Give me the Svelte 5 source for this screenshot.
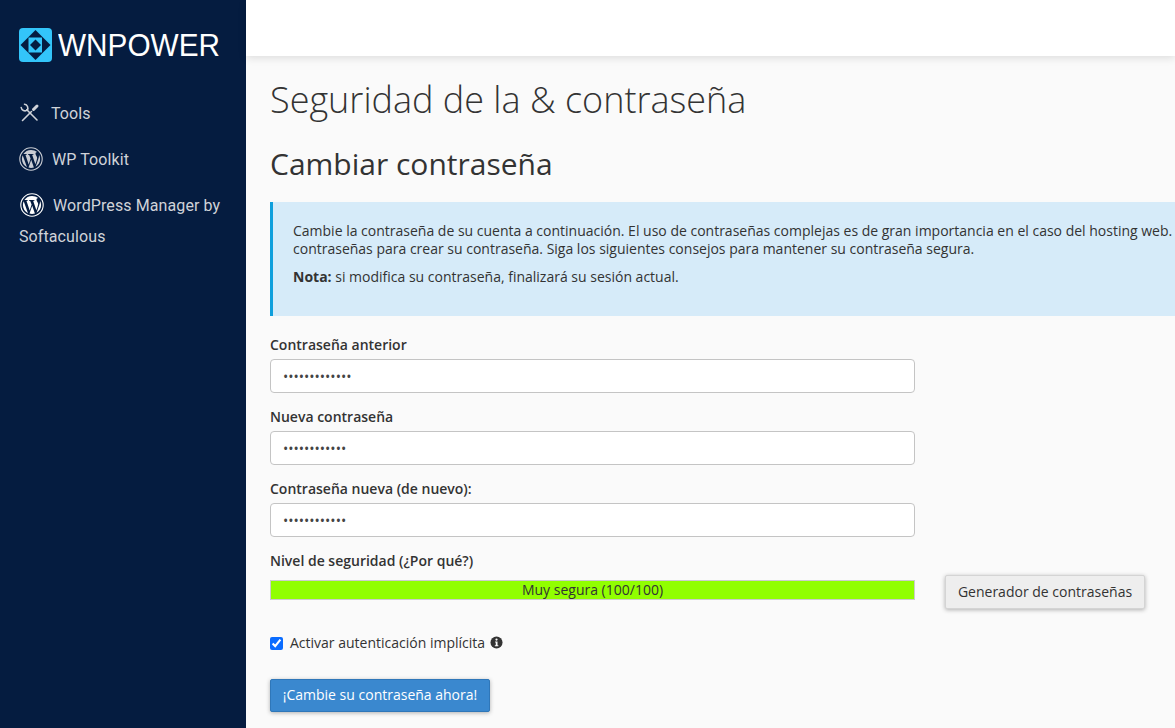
<script lang="ts">
  const fields = [
    { label: 'Contraseña anterior', value: '•••••••••••••' },
    { label: 'Nueva contraseña', value: '••••••••••••' },
    { label: 'Contraseña nueva (de nuevo):', value: '••••••••••••' }
  ];
</script>

{#snippet wpIcon()}
  <svg class="wp" viewBox="0 0 24 24" aria-hidden="true">
    <circle cx="12" cy="12" r="11.2" fill="none" stroke="currentColor" stroke-width="1.1" />
    <path fill="currentColor" d="M2.9 12c0 3.6 2.1 6.7 5.1 8.2L3.7 8.3C3.2 9.5 2.9 10.7 2.9 12zM18.2 11.5c0-1.1-.4-1.9-.8-2.5-.5-.8-.9-1.4-.9-2.2 0-.9.6-1.700 1.600-1.700h.1C16.500 3.900 14.400 3 12 3 8.800 3 6 4.600 4.400 7.100h.6c.9 0 2.400-.1 2.400-.1.5 0 .5.7.1.8 0 0-.5.1-1 .1l3.200 9.500 1.900-5.800-1.400-3.700c-.5 0-.9-.1-.9-.1-.5 0-.4-.8.1-.8 0 0 1.500.1 2.300.1.9 0 2.400-.1 2.400-.1.5 0 .5.7.1.8 0 0-.5.1-1 .1l3.200 9.400.9-2.900c.4-1.200.7-2.100.7-2.900zM12.200 12.800l-2.700 7.800c.8.2 1.600.4 2.500.4 1 0 2-.2 3-.5l-.1-.1-2.700-7.600zM19.900 7.700c0 .3.1.6.1 1 0 .9-.2 1.900-.7 3.200l-2.700 7.900c2.700-1.600 4.500-4.500 4.500-7.800 0-1.600-.4-3-1.200-4.300z" />
  </svg>
{/snippet}

<div class="layout">
  <aside class="sidebar">
    <div class="brand">
      <svg class="logo" viewBox="0 0 33 34" aria-hidden="true">
        <rect width="33" height="34" rx="4" fill="#33c5fa" />
        <path fill="#051c40" d="M16.500 2 31.500 17 16.500 32 1.500 17z" />
        <rect x="9.500" y="9.500" width="13.500" height="15" fill="#33c5fa" />
        <path fill="#051c40" d="M16.500 11.500 22 17l-5.500 5.500L11 17z" />
      </svg>
      <span class="wordmark">WNPOWER</span>
    </div>
    <nav class="menu">
      <a class="item">
        <svg class="tools" viewBox="0 0 20 20" aria-hidden="true">
          <g fill="none" stroke="currentColor" stroke-linecap="round">
            <path stroke-width="1.600" d="M2.500 17.500 11.500 8.500M6.800 6.800 17 17" />
            <path stroke-width="3" d="M13.500 6.500 17 3" />
            <path stroke-width="1.600" d="M1.200 4.500A3.900 3.900 0 0 0 7.200 7.200 3.900 3.900 0 0 0 4.500 1.200" />
          </g>
        </svg>
        <span>Tools</span>
      </a>
      <a class="item">{@render wpIcon()}<span>WP Toolkit</span></a>
      <a class="item wrap"><span class="bright">{@render wpIcon()}</span>WordPress Manager by Softaculous</a>
    </nav>
  </aside>

  <div class="main">
    <header class="topbar"></header>
    <main class="content">
      <h1>Seguridad de la &amp; contraseña</h1>
      <h2>Cambiar contraseña</h2>

      <div class="notice">
        <p>Cambie la contraseña de su cuenta a continuación. El uso de contraseñas complejas es de gran importancia en el caso del hosting web.<br />contraseñas para crear su contraseña. Siga los siguientes consejos para mantener su contraseña segura.</p>
        <p><strong>Nota:</strong> si modifica su contraseña, finalizará su sesión actual.</p>
      </div>

      <form class="form" onsubmit={(e) => e.preventDefault()}>
        {#each fields as f}
          <div class="field">
            <label>{f.label}</label>
            <div class="input">{f.value}</div>
          </div>
        {/each}

        <div class="strength">
          <label>Nivel de seguridad (¿Por qué?)</label>
          <div class="row">
            <div class="meter">Muy segura (100/100)</div>
            <button type="button" class="btn-gen">Generador de contraseñas</button>
          </div>
        </div>

        <div class="check">
          <input type="checkbox" checked />
          <span>Activar autenticación implícita</span>
          <svg class="info" viewBox="0 0 14 14" aria-hidden="true">
            <circle cx="7" cy="7" r="6.500" fill="#333" />
            <circle cx="7" cy="3.800" r="1.200" fill="#fafafa" />
            <path fill="#fafafa" d="M5.500 6h2.600v4h.9v1.100H5.200V10h1V7.100h-.7z" />
          </svg>
        </div>

        <button type="submit" class="btn-primary">¡Cambie su contraseña ahora!</button>
      </form>
    </main>
  </div>
</div>

<style>
  :global(body) {
    overflow: hidden;
    background: #fafafa;
  }

  .layout {
    display: flex;
    height: 728px;
    overflow: hidden;
    font-family: "Open Sans", sans-serif;
    color: #333;
  }

  .sidebar {
    width: 246px;
    flex: none;
    background: #051c40;
    box-sizing: border-box;
    padding: 28px 19px 0;
    font-family: Roboto, sans-serif;
  }

  .brand {
    display: flex;
    align-items: center;
    gap: 6px;
    height: 34px;
  }

  .logo {
    width: 33px;
    height: 34px;
    flex: none;
  }

  .wordmark {
    font-family: "Liberation Sans", sans-serif;
    font-size: 32px;
    line-height: 34px;
    color: #fff;
    white-space: nowrap;
    transform: scaleX(0.93);
    transform-origin: left;
  }

  .menu {
    margin-top: 28px;
    display: flex;
    flex-direction: column;
  }

  .item {
    display: flex;
    align-items: center;
    gap: 9px;
    height: 46px;
    font-size: 16px;
    letter-spacing: 0.1px;
    color: #d0d3d9;
  }

  .item .wp {
    color: #c9ccd3;
  }

  .item.wrap {
    display: block;
    height: auto;
    line-height: 31px;
    margin-top: 8px;
  }

  .bright {
    display: inline-block;
    vertical-align: -6px;
    margin: 0 9px 0 1px;
    color: #fff;
  }

  .bright .wp {
    color: #fff;
    display: block;
  }

  .wp {
    width: 24px;
    height: 24px;
    flex: none;
  }

  .tools {
    width: 20px;
    height: 20px;
    margin: 0 2px 0 1px;
    flex: none;
  }

  .main {
    flex: 1;
    min-width: 0;
    display: flex;
    flex-direction: column;
    background: #fafafa;
  }

  .topbar {
    height: 56px;
    flex: none;
    background: #fff;
    box-shadow: 0 2px 8px rgba(0, 0, 0, 0.12);
  }

  .content {
    flex: 1;
    padding: 0 0 0 24px;
    overflow: hidden;
  }

  h1 {
    margin: 19px 0 0;
    font-size: 36px;
    line-height: 50px;
    font-weight: 300;
    color: #333;
  }

  h2 {
    margin: 19px 0 0;
    font-size: 30px;
    line-height: 40px;
    font-weight: 400;
    color: #333;
  }

  .notice {
    margin-top: 18px;
    box-sizing: border-box;
    width: 1100px;
    height: 114px;
    padding: 20px 20px 0;
    background: #d6ebf9;
    border-left: 3px solid #0f9fdc;
    font-size: 14px;
    line-height: 18px;
    white-space: nowrap;
  }

  .notice p {
    margin: 0 0 10px;
  }

  .form {
    margin-top: 18px;
    font-size: 14px;
  }

  label {
    display: block;
    font-weight: 600;
    line-height: 22px;
    margin-bottom: 3px;
  }

  .field {
    margin-bottom: 13px;
  }

  .input {
    box-sizing: border-box;
    width: 645px;
    height: 34px;
    padding: 0 12px;
    background: #fff;
    border: 1px solid #c4c4c4;
    border-radius: 4px;
    line-height: 33px;
    color: #444;
  }

  .strength {
    padding-top: 1px;
  }

  .strength label {
    line-height: 20px;
    margin-bottom: 9px;
  }

  .strength .row {
    display: flex;
    align-items: flex-start;
    gap: 30px;
  }

  .meter {
    box-sizing: border-box;
    width: 645px;
    height: 20px;
    background: #91ff00;
    border: 1px solid #ccc;
    line-height: 18px;
    text-align: center;
    color: #333;
  }

  .btn-gen {
    height: 34px;
    width: 200px;
    margin-top: -5px;
    padding: 0 0 2px;
    font: 14px "Open Sans", sans-serif;
    color: #333;
    background: #eee;
    border: 1px solid #d4d4d4;
    border-radius: 2px;
    box-shadow: 0 1px 4px rgba(0, 0, 0, 0.3);
  }

  .check {
    margin-top: 23px;
    display: flex;
    align-items: center;
    height: 20px;
  }

  .check input {
    width: 13px;
    height: 13px;
    margin: 2px 7px 0 0;
    accent-color: #0a6cff;
  }

  .info {
    width: 13px;
    height: 13px;
    margin-left: 5px;
  }

  .btn-primary {
    display: block;
    margin-top: 27px;
    width: 220px;
    height: 33px;
    padding: 0 0 2px;
    font: 14px "Open Sans", sans-serif;
    color: #fff;
    background: #3a88cf;
    border: 1px solid #2f77b9;
    border-radius: 2px;
    box-shadow: 0 1px 4px rgba(0, 0, 0, 0.3);
  }
</style>
